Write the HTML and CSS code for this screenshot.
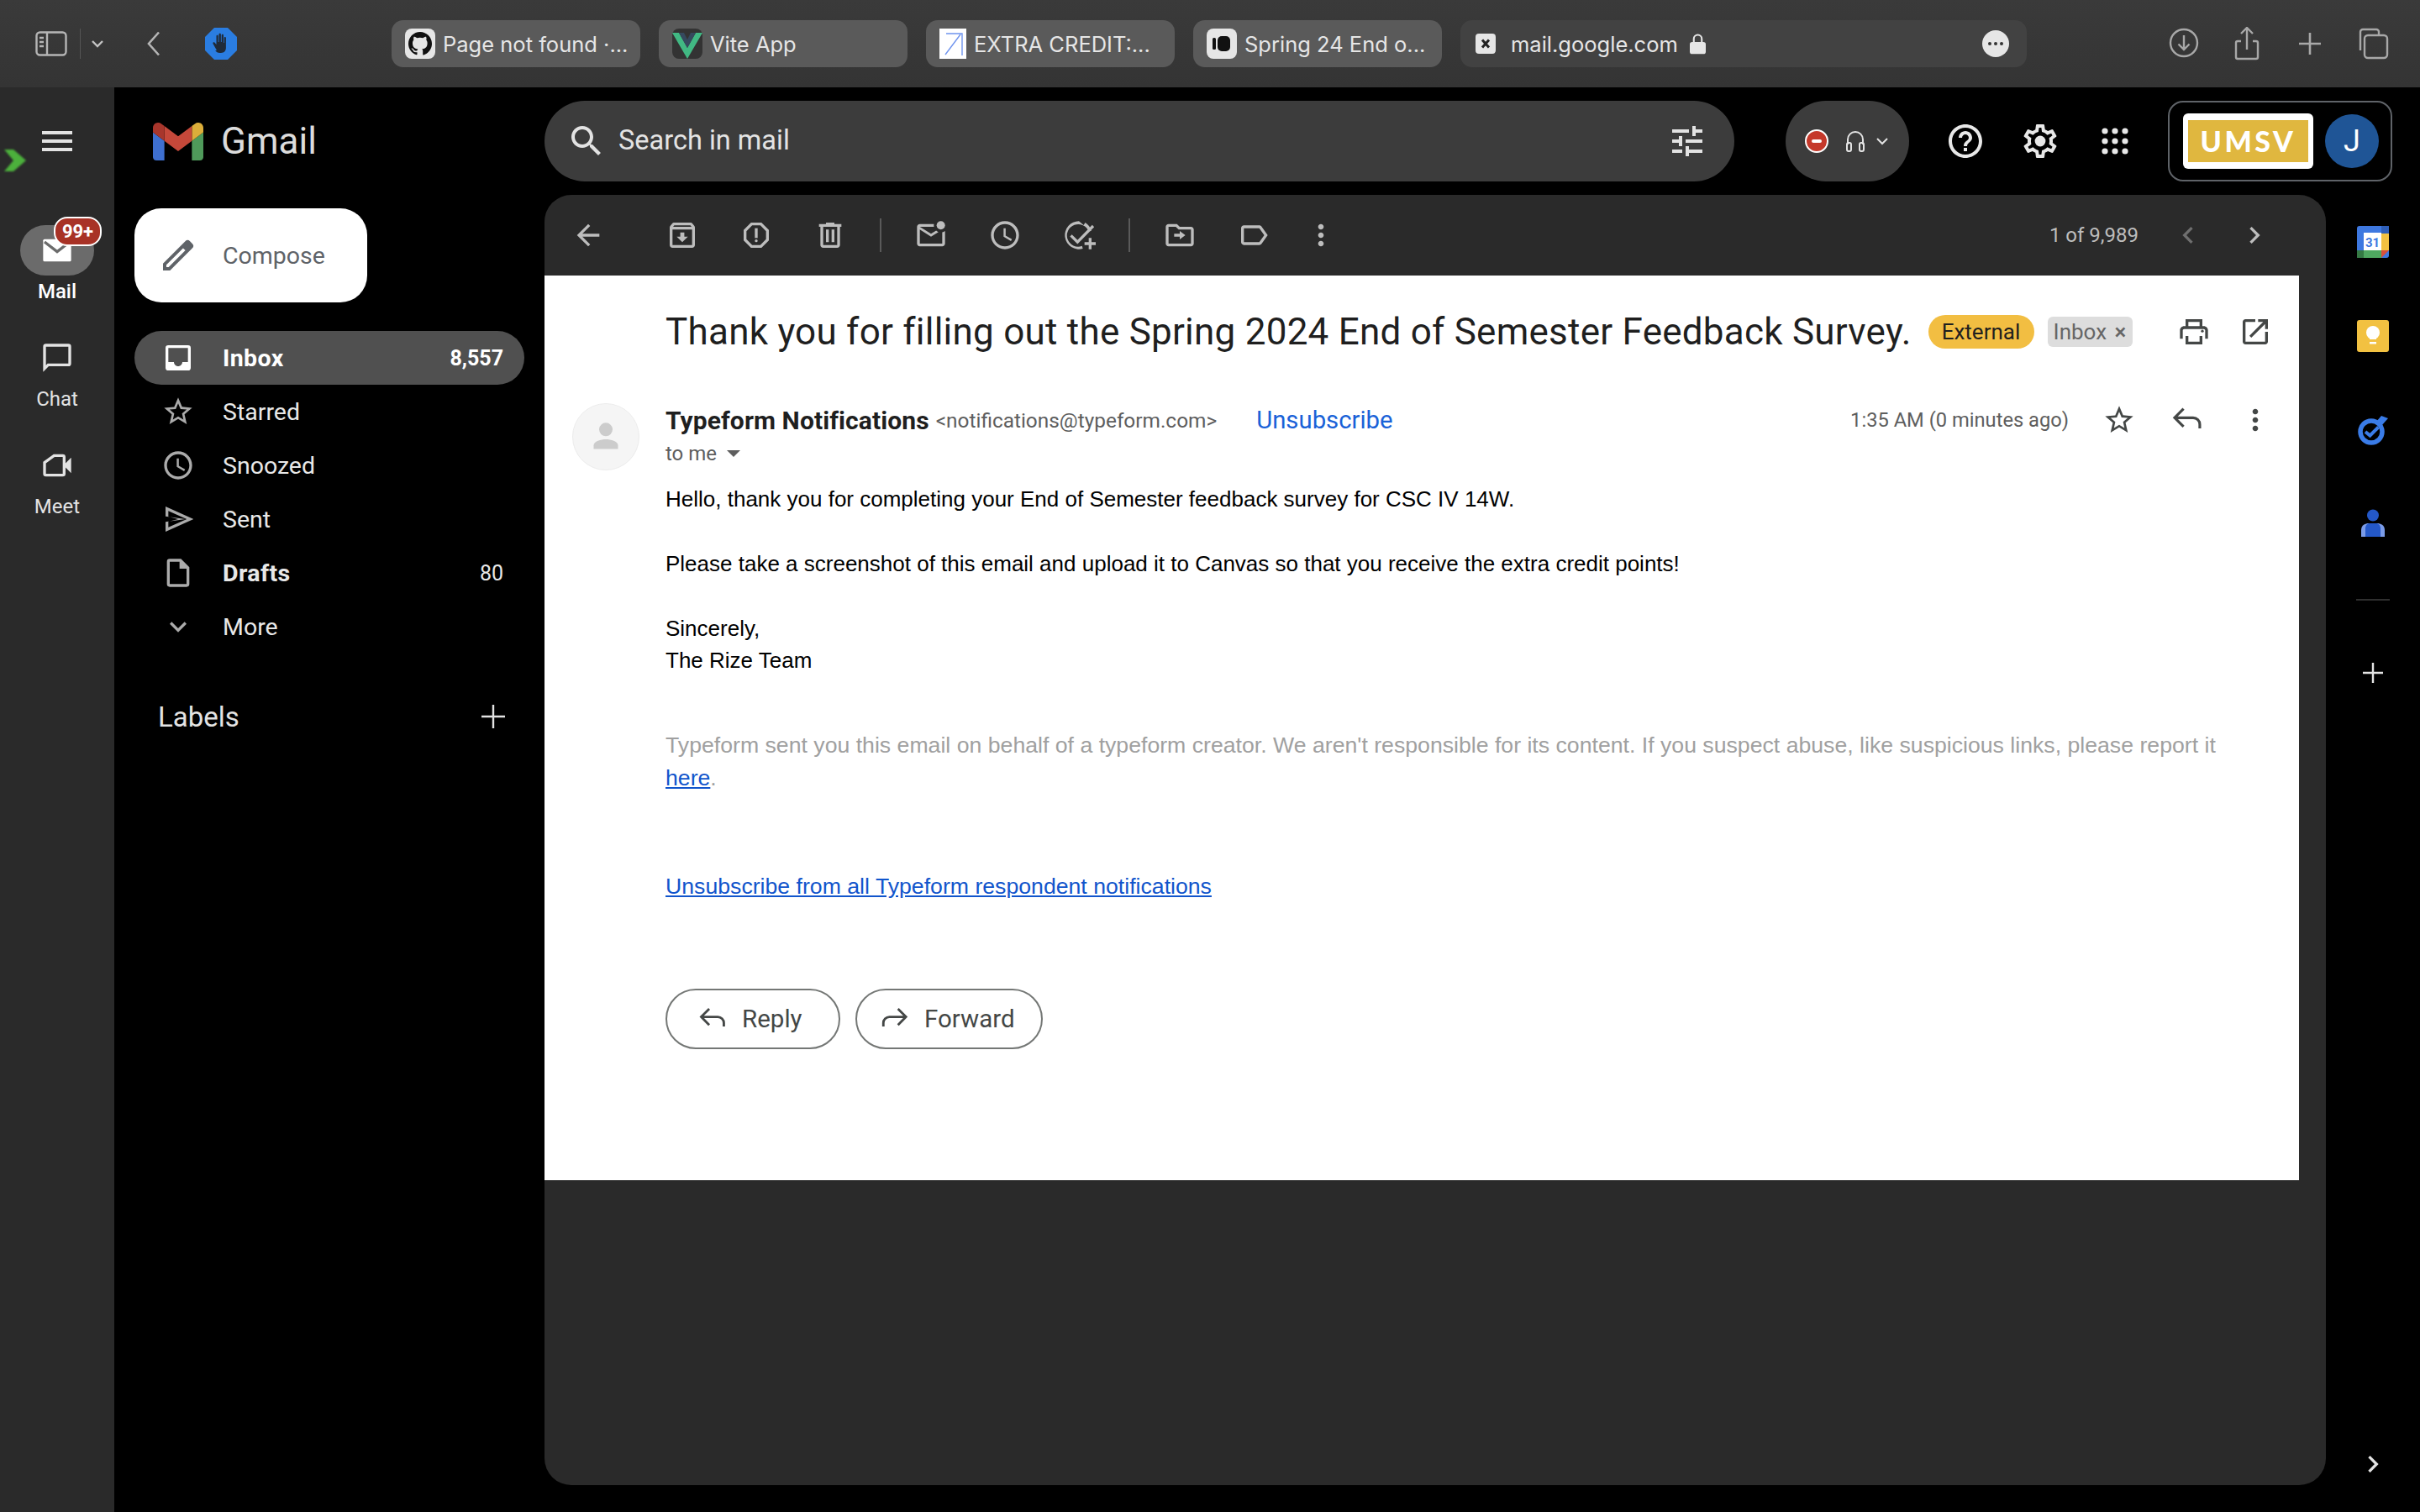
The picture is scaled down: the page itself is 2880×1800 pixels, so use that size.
FILE: index.html
```html
<!DOCTYPE html>
<html lang="en">

<head>
  <meta charset="utf-8" />
  <title>Thank you for filling out the Spring 2024 End of Semester Feedback Survey. - Gmail</title>
  <link rel="stylesheet" href="styles.css">
</head>

<body>
  <svg class="defs" aria-hidden="true">
    <symbol id="i-dots" viewBox="0 0 24 24"><path d="M12 8c1.1 0 2-.9 2-2s-.9-2-2-2-2 .9-2 2 .9 2 2 2zm0 2c-1.1 0-2 .9-2 2s.9 2 2 2 2-.9 2-2-.9-2-2-2zm0 6c-1.1 0-2 .9-2 2s.9 2 2 2 2-.9 2-2-.9-2-2-2z"/></symbol>
    <symbol id="i-clock" viewBox="0 0 24 24"><path d="M11.99 2C6.47 2 2 6.48 2 12s4.47 10 9.99 10C17.52 22 22 17.52 22 12S17.52 2 11.99 2zM12 20c-4.42 0-8-3.58-8-8s3.58-8 8-8 8 3.58 8 8-3.58 8-8 8zm.5-13H11v6l5.25 3.15.75-1.23-4.5-2.67z"/></symbol>
    <symbol id="i-star" viewBox="0 0 24 24"><path d="M22 9.24l-7.19-.62L12 2 9.19 8.63 2 9.24l5.46 4.73L5.82 21 12 17.27 18.18 21l-1.63-7.03L22 9.24zM12 15.4l-3.76 2.27 1-4.28-3.32-2.88 4.38-.38L12 6.1l1.71 4.04 4.38.38-3.32 2.88 1 4.28L12 15.4z"/></symbol>
    <symbol id="i-reply" viewBox="0 0 24 24"><path d="M9.5 6 3.5 12l6 6-1.4 1.4L.7 12l7.4-7.4zM3 11h13a6 6 0 0 1 6 6v3h-2v-3a4 4 0 0 0-4-4H3z" transform="translate(1 -1) scale(.95)"/></symbol>
    <symbol id="i-forward" viewBox="0 0 24 24"><path d="M14.5 6l6 6-6 6 1.4 1.4 7.4-7.4-7.4-7.4zM21 11H8a6 6 0 0 0-6 6v3h2v-3a4 4 0 0 1 4-4h13z" transform="translate(0 -1) scale(.95)"/></symbol>
  </svg>

  <header class="browser-bar">
    <div class="browser-left">
      <svg class="sidebar-btn" viewBox="0 0 38 30" fill="none" stroke="#b5b5b5" stroke-width="2.4"><rect x="1.5" y="1.5" width="35" height="27" rx="4"/><path d="M14 2v26M5 8h5M5 13h5M5 18h5"/></svg>
      <span class="browser-divider"></span>
      <svg class="small-chevron" viewBox="0 0 16 10" fill="none" stroke="#c4c4c4" stroke-width="2.4"><path d="M2 2l6 6 6-6"/></svg>
      <svg class="back-chevron" viewBox="0 0 18 30" fill="none" stroke="#b5b5b5" stroke-width="2.6"><path d="M15 1.5 3 15l12 13.5"/></svg>
      <svg class="adblock" viewBox="0 0 38 38"><path fill="#2a7de1" d="M11 0h16l11 11v16L27 38H11L0 27V11z"/><path fill="#1f2b3a" d="M14 27 9.5 19c-.6-1.3 1-2.3 2-1.2l2 2.2V10c0-1.6 2.2-1.6 2.2 0v7h.8V8c0-1.6 2.4-1.6 2.4 0v9h.8V9c0-1.6 2.3-1.6 2.3 0v9h.7v-6c0-1.5 2.2-1.5 2.2 0v12c0 3-2 6-6 6h-1c-3 0-4.500-1.200-5.700-3z"/></svg>
    </div>

    <div class="tab">
      <svg class="tab-icon" viewBox="0 0 36 36"><rect width="36" height="36" rx="8" fill="#e6e6e6"/><path fill="#111" d="M18 4C10.300 4 4 10.300 4 18c0 6.200 4 11.400 9.600 13.300.7.100.9-.3.9-.7v-2.400c-3.900.800-4.700-1.700-4.700-1.700-.6-1.600-1.600-2-1.600-2-1.300-.9.100-.9.100-.9 1.400.100 2.100 1.400 2.100 1.400 1.300 2.100 3.300 1.500 4.100 1.200.1-.9.500-1.500.9-1.900-3.100-.3-6.400-1.500-6.400-6.900 0-1.500.5-2.800 1.400-3.800-.1-.4-.6-1.800.1-3.700 0 0 1.200-.4 3.800 1.400a13 13 0 0 1 7 0c2.700-1.800 3.800-1.400 3.800-1.400.8 1.900.3 3.300.1 3.700.9 1 1.400 2.300 1.400 3.800 0 5.400-3.300 6.600-6.400 6.900.5.400 1 1.300 1 2.600v3.900c0 .4.200.8 1 .7C28 29.400 32 24.200 32 18c0-7.700-6.300-14-14-14z"/></svg>
      <span>Page not found ·...</span>
    </div>
    <div class="tab">
      <svg class="tab-icon" viewBox="0 0 36 36"><rect width="36" height="36" rx="8" fill="#333"/><path fill="#41b883" d="M0 5h8l10 18L28 5h8L18 36z"/><path fill="#35495e" d="M8 5h6l4 8 4-8h6L18 23z"/></svg>
      <span>Vite App</span>
    </div>
    <div class="tab">
      <svg class="tab-icon square" viewBox="0 0 32 36"><rect width="32" height="36" fill="#fff"/><path fill="none" stroke="#6f94ee" stroke-width="1.400" d="M8 6h19v26M25 7 7 31"/></svg>
      <span>EXTRA CREDIT:...</span>
    </div>
    <div class="tab">
      <svg class="tab-icon" viewBox="0 0 36 36"><rect width="36" height="36" rx="8" fill="#e6e6e6"/><rect x="7" y="11" width="4" height="14" rx="1.500" fill="#111"/><rect x="13" y="9" width="15" height="18" rx="5" fill="#111"/></svg>
      <span>Spring 24 End o...</span>
    </div>
    <div class="address">
      <svg class="address-icon" viewBox="0 0 24 24"><rect width="24" height="24" rx="4" fill="#e6e6e6"/><path stroke="#222" stroke-width="3" d="M8 7.500l8 9M16 7.500l-8 9"/></svg>
      <span class="address-text">mail.google.com</span>
      <svg class="lock" viewBox="0 0 20 26"><path fill="none" stroke="#e6e6e6" stroke-width="2.200" d="M5 12V7a5 5 0 0 1 10 0v5"/><rect y="11" width="20" height="15" rx="3" fill="#e6e6e6"/></svg>
      <svg class="more-circle" viewBox="0 0 32 32"><circle cx="16" cy="16" r="16" fill="#e6e6e6"/><circle cx="9" cy="16" r="2" fill="#333"/><circle cx="16" cy="16" r="2" fill="#333"/><circle cx="23" cy="16" r="2" fill="#333"/></svg>
    </div>

    <div class="browser-right">
      <svg class="bar-icon" viewBox="0 0 40 40" fill="none" stroke="#a8a8a8" stroke-width="2.400"><circle cx="20" cy="19" r="16"/><path d="M20 10v17M13.500 20.500 20 27l6.500-6.500"/></svg>
      <svg class="bar-icon" viewBox="0 0 40 40" fill="none" stroke="#a8a8a8" stroke-width="2.400"><path d="M13 17H9a2 2 0 0 0-2 2v17a2 2 0 0 0 2 2h22a2 2 0 0 0 2-2V19a2 2 0 0 0-2-2h-4M20 27V1M13 8l7-7 7 7"/></svg>
      <svg class="bar-icon" viewBox="0 0 40 40" fill="none" stroke="#a8a8a8" stroke-width="2.600"><path d="M20 7v26M7 20h26"/></svg>
      <svg class="bar-icon" viewBox="0 0 40 40" fill="none" stroke="#a8a8a8" stroke-width="2.400"><path d="M5 28V6a3 3 0 0 1 3-3h16a3 3 0 0 1 3 3v3"/><rect x="10" y="10" width="27" height="27" rx="4"/></svg>
    </div>
  </header>

  <div class="app">
    <aside class="rail">
      <div class="rail-top">
        <svg class="hamburger" viewBox="0 0 36 24"><path fill="#e3e3e3" d="M0 0h36v4H0zM0 10h36v4H0zM0 20h36v4H0z"/></svg>
      </div>
      <div class="rail-item current">
        <div class="rail-pill">
          <svg class="rail-icon" viewBox="0 0 24 24"><path fill="#fff" d="M3 4h18a1 1 0 0 1 1 1v14a1 1 0 0 1-1 1H3a1 1 0 0 1-1-1V5a1 1 0 0 1 1-1z"/><path fill="none" stroke="#6b6b6b" stroke-width="2" d="M3 6l9 7 9-7"/></svg>
          <span class="rail-badge">99+</span>
        </div>
        <span class="rail-label">Mail</span>
      </div>
      <div class="rail-item">
        <div class="rail-pill">
          <svg class="rail-icon" viewBox="0 0 24 24"><path fill="#e3e3e3" d="M20 2H4a2 2 0 0 0-2 2v18l4-4h14a2 2 0 0 0 2-2V4a2 2 0 0 0-2-2zm0 14H5.200L4 17.200V4h16z"/></svg>
        </div>
        <span class="rail-label">Chat</span>
      </div>
      <div class="rail-item">
        <div class="rail-pill">
          <svg class="rail-icon" viewBox="0 0 24 24"><path fill="#e3e3e3" d="M18 10.500V6a2 2 0 0 0-2-2H9.500L2 9.500V18a2 2 0 0 0 2 2h12a2 2 0 0 0 2-2v-4.500l4 4v-11zM16 18H4v-7.500L10.200 6H16z"/></svg>
        </div>
        <span class="rail-label">Meet</span>
      </div>
      <svg class="green-mark" viewBox="0 0 26 26"><path fill="#4cb03c" d="M0 0h11l15 13-15 13H0l11-13z"/></svg>
    </aside>

    <div class="workspace">
      <div class="topbar">
        <div class="brand">
          <svg class="gmail-logo" viewBox="52 42 88 66"><path fill="#3e6fd0" d="M58 108h14V74L52 59v43c0 3.320 2.690 6 6 6"/><path fill="#4f9a5a" d="M120 108h14c3.320 0 6-2.690 6-6V59l-20 15"/><path fill="#dcae3a" d="M120 48v26l20-15v-8c0-7.420-8.470-11.650-14.400-7.200"/><path fill="#c5483a" d="M72 74V48l24 18 24-18v26L96 92"/><path fill="#a8362c" d="M52 51v8l20 15V48l-5.600-4.200c-5.940-4.450-14.400-.22-14.400 7.200"/></svg>
          <span class="gmail-word">Gmail</span>
        </div>
        <div class="search">
          <svg class="search-icon" viewBox="0 0 24 24"><path d="M15.500 14h-.79l-.28-.27C15.410 12.590 16 11.110 16 9.500 16 5.910 13.090 3 9.500 3S3 5.910 3 9.500 5.910 16 9.500 16c1.610 0 3.090-.59 4.230-1.570l.27.28v.79l5 4.990L20.490 19l-4.990-5zm-6 0C7.010 14 5 11.990 5 9.500S7.010 5 9.500 5 14 7.010 14 9.500 11.990 14 9.500 14z"/></svg>
          <span class="search-text">Search in mail</span>
          <svg class="tune-icon" viewBox="0 0 24 24"><path d="M3 17v2h6v-2H3zM3 5v2h10V5H3zm10 16v-2h8v-2h-8v-2h-2v6h2zM7 9v2H3v2h4v2h2V9H7zm14 4v-2H11v2h10zm-6-4h2V7h4V5h-4V3h-2v6z"/></svg>
        </div>
        <div class="status-pill">
          <svg class="status-dot" viewBox="0 0 28 28"><circle cx="14" cy="14" r="13" fill="#c5392b" stroke="#fff" stroke-width="2"/><rect x="8" y="12" width="12" height="4" rx="2" fill="#fff"/></svg>
          <svg class="headset" viewBox="0 0 24 28" fill="none" stroke="#e3e3e3" stroke-width="2"><path d="M3 18v-6a9 9 0 0 1 18 0v6"/><rect x="2" y="16" width="5" height="10" rx="2"/><rect x="17" y="16" width="5" height="10" rx="2"/></svg>
          <svg class="small-chevron" viewBox="0 0 16 10" fill="none" stroke="#e3e3e3" stroke-width="2"><path d="M2 2l6 6 6-6"/></svg>
        </div>
        <svg class="top-icon help" viewBox="0 0 24 24"><path d="M11 18h2v-2h-2v2zm1-16C6.480 2 2 6.480 2 12s4.480 10 10 10 10-4.480 10-10S17.520 2 12 2zm0 18c-4.410 0-8-3.590-8-8s3.590-8 8-8 8 3.590 8 8-3.590 8-8 8zm0-14c-2.210 0-4 1.790-4 4h2c0-1.100.9-2 2-2s2 .9 2 2c0 2-3 1.750-3 5h2c0-2.250 3-2.500 3-5 0-2.210-1.790-4-4-4z"/></svg>
        <svg class="top-icon" viewBox="0 0 24 24"><path d="M19.430 12.980c.04-.32.07-.64.07-.98 0-.34-.03-.66-.07-.98l2.110-1.650c.19-.15.24-.42.12-.64l-2-3.460c-.09-.16-.26-.25-.44-.25-.06 0-.12.01-.17.03l-2.490 1c-.52-.4-1.080-.73-1.690-.98l-.38-2.650C14.460 2.180 14.250 2 14 2h-4c-.25 0-.46.18-.49.42l-.38 2.650c-.61.25-1.170.59-1.690.98l-2.490-1c-.06-.02-.12-.03-.18-.03-.17 0-.34.09-.43.25l-2 3.460c-.13.22-.07.49.12.64l2.110 1.650c-.04.32-.07.65-.07.98 0 .33.03.66.07.98l-2.110 1.650c-.19.15-.24.42-.12.64l2 3.460c.09.16.26.25.44.25.06 0 .12-.01.17-.03l2.490-1c.52.4 1.080.73 1.690.98l.38 2.650c.03.24.24.42.49.42h4c.25 0 .46-.18.49-.42l.38-2.650c.61-.25 1.170-.59 1.690-.98l2.490 1c.06.02.12.03.18.03.17 0 .34-.09.43-.25l2-3.460c.12-.22.07-.49-.12-.64l-2.110-1.650zm-1.980-1.710c.04.31.05.52.05.73 0 .21-.02.43-.05.73l-.14 1.130.89.7 1.080.84-.7 1.210-1.270-.51-1.040-.42-.9.68c-.43.32-.84.56-1.250.73l-1.060.43-.16 1.130-.2 1.350h-1.400l-.19-1.350-.16-1.130-1.060-.43c-.43-.18-.83-.41-1.230-.71l-.91-.7-1.060.43-1.270.51-.7-1.210 1.080-.84.89-.7-.14-1.130c-.03-.31-.05-.54-.05-.74s.02-.43.05-.73l.14-1.130-.89-.7-1.080-.84.7-1.210 1.270.51 1.040.42.9-.68c.43-.32.84-.56 1.250-.73l1.060-.43.16-1.130.2-1.350h1.390l.19 1.350.16 1.130 1.060.43c.43.18.83.41 1.230.71l.91.7 1.060-.43 1.270-.51.7 1.210-1.070.85-.89.7.14 1.130z"/><circle cx="12" cy="12" r="3.200"/></svg>
        <svg class="top-icon apps" viewBox="0 0 32 32"><circle cx="4" cy="4" r="3.600"/><circle cx="16" cy="4" r="3.600"/><circle cx="28" cy="4" r="3.600"/><circle cx="4" cy="16" r="3.600"/><circle cx="16" cy="16" r="3.600"/><circle cx="28" cy="16" r="3.600"/><circle cx="4" cy="28" r="3.600"/><circle cx="16" cy="28" r="3.600"/><circle cx="28" cy="28" r="3.600"/></svg>
        <div class="account">
          <div class="org-logo"><span>UMSV</span></div>
          <div class="avatar-j">J</div>
        </div>
      </div>

      <div class="content-row">
        <nav class="nav">
          <div class="compose">
            <svg class="compose-icon" viewBox="0 0 24 24"><path d="M20.410 4.940l-1.350-1.350a2 2 0 0 0-2.830 0L3 16.820V21h4.180L20.410 7.770a2 2 0 0 0 0-2.830zM6.350 19H5v-1.350L14.960 7.690l1.350 1.350z"/></svg>
            <span>Compose</span>
          </div>
          <ul class="nav-list">
            <li class="nav-row active">
              <svg class="nav-icon" viewBox="0 0 24 24"><path fill="#fff" d="M19 3H5a2 2 0 0 0-2 2v14a2 2 0 0 0 2 2h14a2 2 0 0 0 2-2V5a2 2 0 0 0-2-2zm0 12h-4c0 1.660-1.350 3-3 3s-3-1.340-3-3H5V5h14z"/></svg>
              <span class="nav-name">Inbox</span><span class="nav-count">8,557</span>
            </li>
            <li class="nav-row">
              <svg class="nav-icon"><use href="#i-star"/></svg>
              <span class="nav-name">Starred</span>
            </li>
            <li class="nav-row">
              <svg class="nav-icon"><use href="#i-clock"/></svg>
              <span class="nav-name">Snoozed</span>
            </li>
            <li class="nav-row">
              <svg class="nav-icon" viewBox="0 0 24 24"><path d="M3.010 21 23 12 3.010 3 3 10l14.300 2L3 14l.01 7zm2-10.750V6.090L18.150 12 5 17.910V13.750L12 12z"/></svg>
              <span class="nav-name">Sent</span>
            </li>
            <li class="nav-row strong">
              <svg class="nav-icon" viewBox="0 0 24 24"><path d="M14 2H6a2 2 0 0 0-2 2v16a2 2 0 0 0 2 2h12a2 2 0 0 0 2-2V8zm4 18H6V4h7v5h5z"/></svg>
              <span class="nav-name">Drafts</span><span class="nav-count plain">80</span>
            </li>
            <li class="nav-row">
              <svg class="nav-icon" viewBox="0 0 24 24"><path d="M7.410 8.590 12 13.170l4.590-4.580L18 10l-6 6-6-6z"/></svg>
              <span class="nav-name">More</span>
            </li>
          </ul>
          <div class="labels-row">
            <span>Labels</span>
            <svg class="labels-add" viewBox="0 0 32 32"><path fill="#e3e3e3" d="M14.800 2h2.400v12.800H30v2.400H17.200V30h-2.400V17.200H2v-2.400h12.800z"/></svg>
          </div>
        </nav>

        <main class="panel">
          <div class="toolbar">
            <svg class="tool back" viewBox="0 0 24 24"><path d="M20 11H7.830l5.590-5.590L12 4l-8 8 8 8 1.410-1.410L7.830 13H20v-2z"/></svg>
            <svg class="tool first" viewBox="0 0 24 24"><path d="M20.540 5.230l-1.390-1.680C18.880 3.210 18.470 3 18 3H6c-.47 0-.88.21-1.160.55L3.460 5.230C3.170 5.570 3 6.020 3 6.500V19c0 1.100.9 2 2 2h14c1.100 0 2-.9 2-2V6.500c0-.48-.17-.93-.46-1.270zM6.240 5h11.520l.81.97H5.440l.8-.97zM5 19V8h14v11H5zm8.450-9h-2.900v3H8l4 4 4-4h-2.550z"/></svg>
            <svg class="tool" viewBox="0 0 24 24"><path d="M15.730 3H8.270L3 8.270v7.460L8.270 21h7.460L21 15.730V8.270L15.730 3zM19 14.900 14.900 19H9.100L5 14.900V9.100L9.100 5h5.800L19 9.100v5.800z"/><circle cx="12" cy="16" r="1"/><path d="M11 7h2v7h-2z"/></svg>
            <svg class="tool" viewBox="0 0 24 24"><path d="M15 4V3H9v1H4v2h1v13c0 1.100.9 2 2 2h10c1.100 0 2-.9 2-2V6h1V4h-5zm2 15H7V6h10v13zM9 8h2v9H9zm4 0h2v9h-2z"/></svg>
            <span class="tool-sep"></span>
            <svg class="tool" viewBox="0 0 24 24"><path d="M22 8.980V18c0 1.100-.9 2-2 2H4c-1.100 0-2-.9-2-2V6c0-1.100.9-2 2-2h10.100c-.06.32-.1.66-.1 1s.04.68.1 1H4l8 5 3.670-2.290c.47.43 1.020.76 1.630.98L12 13 4 8v10h16V9.900c.74-.15 1.420-.48 2-.92z"/><circle cx="19" cy="5" r="3"/></svg>
            <svg class="tool"><use href="#i-clock"/></svg>
            <svg class="tool" viewBox="0 0 24 24"><path d="M12 2a10 10 0 1 0 2.800 19.600l-.6-1.900A8 8 0 1 1 19 9.500l1.900-.6A10 10 0 0 0 16.500 3L15.400 4.800zM21.500 4.700 11 15.500l-4-4-1.400 1.400L11 18.300 22.900 6.100zM19 14v3h-3v2h3v3h2v-3h3v-2h-3v-3z"/></svg>
            <span class="tool-sep"></span>
            <svg class="tool" viewBox="0 0 24 24"><path d="M20 6h-8l-2-2H4c-1.100 0-1.990.9-1.990 2L2 18c0 1.100.9 2 2 2h16c1.100 0 2-.9 2-2V8c0-1.100-.9-2-2-2zm0 12H4V6h5.170l2 2H20v10zm-8-3v-2H8v-2h4V9l4 3z"/></svg>
            <svg class="tool" viewBox="0 0 24 24"><path d="M17.630 5.840C17.270 5.330 16.670 5 16 5L5 5.010C3.900 5.010 3 5.900 3 7v10c0 1.100.9 1.990 2 1.990L16 19c.67 0 1.270-.33 1.630-.84L22 12l-4.370-6.160zM16 17H5V7h11l3.550 5L16 17z"/></svg>
            <svg class="tool dots"><use href="#i-dots"/></svg>
            <span class="page-count">1 of 9,989</span>
            <svg class="tool pager dim" viewBox="0 0 24 24"><path d="M15.410 7.410 14 6l-6 6 6 6 1.410-1.410L10.830 12z"/></svg>
            <svg class="tool pager" viewBox="0 0 24 24"><path d="M10 6 8.590 7.410 13.170 12l-4.580 4.590L10 18l6-6z"/></svg>
          </div>

          <article class="message">
            <div class="subject-row">
              <h1>Thank you for filling out the Spring 2024 End of Semester Feedback Survey.</h1>
              <span class="chip-external">External</span>
              <span class="chip-inbox">Inbox <b>×</b></span>
              <div class="subject-actions">
                <svg class="msg-icon" viewBox="0 0 24 24"><path d="M19 8h-1V3H6v5H5c-1.660 0-3 1.340-3 3v6h4v4h12v-4h4v-6c0-1.660-1.340-3-3-3zM8 5h8v3H8V5zm8 14H8v-4h8v4zm2-2v-2H6v2H4v-6c0-.55.45-1 1-1h14c.55 0 1 .45 1 1v6h-2z"/><circle cx="18" cy="11.500" r="1"/></svg>
                <svg class="msg-icon" viewBox="0 0 24 24"><path d="M19 19H5V5h7V3H5c-1.110 0-2 .9-2 2v14c0 1.100.89 2 2 2h14c1.100 0 2-.9 2-2v-7h-2v7zM14 3v2h3.590l-9.830 9.830 1.410 1.410L19 6.410V10h2V3h-7z"/></svg>
              </div>
            </div>

            <div class="msg-body">
              <div class="sender-avatar">
                <svg viewBox="0 0 40 40"><circle cx="20" cy="14" r="5.500" fill="#ccc"/><path fill="#ccc" d="M10 30v-3c0-3.500 6-5 10-5s10 1.500 10 5v3z"/></svg>
              </div>
              <div class="msg-main">
                <div class="sender-row">
                  <span class="sender-name">Typeform Notifications</span>
                  <span class="sender-mail">&lt;notifications@typeform.com&gt;</span>
                  <a class="sender-unsub">Unsubscribe</a>
                  <span class="msg-time">1:35 AM (0 minutes ago)</span>
                  <svg class="msg-icon"><use href="#i-star"/></svg>
                  <svg class="msg-icon"><use href="#i-reply"/></svg>
                  <svg class="msg-icon"><use href="#i-dots"/></svg>
                </div>
                <div class="to-row">to me <span class="caret"></span></div>

                <div class="mail-text">
                  <p>Hello, thank you for completing your End of Semester feedback survey for CSC IV 14W.<br><br>Please take a screenshot of this email and upload it to Canvas so that you receive the extra credit points!<br><br>Sincerely,<br>The Rize Team</p>
                  <p class="mail-note">Typeform sent you this email on behalf of a typeform creator. We aren't responsible for its content. If you suspect abuse, like suspicious links, please report it <a>here</a>.</p>
                  <p class="mail-unsub"><a>Unsubscribe from all Typeform respondent notifications</a></p>
                </div>

                <div class="reply-row">
                  <div class="reply-btn reply"><svg><use href="#i-reply"/></svg>Reply</div>
                  <div class="reply-btn forward"><svg><use href="#i-forward"/></svg>Forward</div>
                </div>
              </div>
            </div>
          </article>
        </main>

        <aside class="addons">
          <svg class="addon" viewBox="0 0 38 38"><rect width="38" height="38" rx="3" fill="#3e78e0"/><rect x="29" width="9" height="9" fill="#2f5fb8"/><rect x="29" y="9" width="9" height="20" fill="#f2c141"/><rect y="29" width="29" height="9" fill="#4fa860"/><rect y="29" width="8" height="9" fill="#357a44"/><path fill="#d8503c" d="M29 29h9l-9 9z"/><rect x="8" y="8" width="21" height="21" fill="#fff"/><text x="18.500" y="25" text-anchor="middle" class="cal-num">31</text></svg>
          <svg class="addon" viewBox="0 0 38 38"><rect width="38" height="38" rx="3" fill="#f2c141"/><circle cx="19" cy="15" r="8" fill="#fff"/><rect x="15" y="19" width="8" height="4" fill="#fff"/><rect x="15" y="26" width="8" height="2.500" fill="#fff"/></svg>
          <svg class="addon" viewBox="0 0 38 38"><circle cx="17" cy="21" r="13" fill="none" stroke="#3a7ce8" stroke-width="5.500"/><path fill="#3a7ce8" d="M29 2l8 3-8 9-6-5z"/><path fill="none" stroke="#3a7ce8" stroke-width="4" d="M10 21l5.500 4.500 10-10"/></svg>
          <svg class="addon" viewBox="0 0 38 38"><circle cx="19" cy="8.500" r="7" fill="#2458c8"/><path fill="#7b9ce8" d="M5 34v-8c0-6 5-8 9-8h10c4 0 9 2 9 8v8z"/><path fill="#2458c8" d="M10 34V24c0-4 3-6 5-6h8c2 0 5 2 5 6v10z"/></svg>
          <span class="addon-sep"></span>
          <svg class="addon addon-plus" viewBox="0 0 24 24"><path fill="#e3e3e3" d="M10.800 0h2.400v10.800H24v2.400H13.200V24h-2.400V13.200H0v-2.400h10.800z"/></svg>
          <svg class="addon-collapse" viewBox="0 0 24 24"><path fill="#e3e3e3" d="M10 6 8.590 7.410 13.170 12l-4.580 4.590L10 18l6-6z"/></svg>
        </aside>
      </div>
    </div>
  </div>
</body>

</html>
```

FILE: styles.css
```css
* {
  box-sizing: border-box;
}

html,
body {
  margin: 0;
  height: 100%;
  overflow: hidden;
  background: #000;
}

body {
  font-family: Roboto, sans-serif;
  color: #e3e3e3;
  display: flex;
  flex-direction: column;
}

.defs {
  display: none;
}

svg {
  display: block;
  flex: none;
}

svg:not([fill]) {
  fill: currentColor;
}

/* browser chrome */
.browser-bar {
  height: 104px;
  flex: none;
  display: flex;
  align-items: center;
  background: linear-gradient(#3a3a3a, #343434);
  font-family: Inter, sans-serif;
  font-size: 25.5px;
  color: #e6e6e6;
}

.browser-left {
  width: 466px;
  flex: none;
  display: flex;
  align-items: center;
  padding-left: 42px;
}

.sidebar-btn {
  width: 38px;
  height: 30px;
}

.browser-divider {
  width: 1px;
  height: 36px;
  margin: 0 0 0 15px;
  background: #555;
}

.small-chevron {
  width: 16px;
  height: 10px;
}

.browser-left .small-chevron {
  margin-left: 12px;
}

.back-chevron {
  width: 18px;
  height: 30px;
  margin-left: 50px;
}

.adblock {
  width: 38px;
  height: 38px;
  margin-left: 52px;
}

.tab {
  width: 296px;
  height: 56px;
  flex: none;
  margin-right: 22px;
  padding-left: 16px;
  display: flex;
  align-items: center;
  gap: 9px;
  border-radius: 14px;
  background: #5a5a5a;
  white-space: nowrap;
}

.tab-icon {
  width: 36px;
  height: 36px;
}

.tab-icon.square {
  width: 32px;
}

.address {
  width: 674px;
  height: 56px;
  flex: none;
  padding: 0 21px 0 18px;
  display: flex;
  align-items: center;
  border-radius: 14px;
  background: #424242;
}

.address-icon {
  width: 24px;
  height: 24px;
}

.address-text {
  margin-left: 18px;
}

.lock {
  width: 19px;
  height: 26px;
  margin-left: 14px;
}

.more-circle {
  width: 32px;
  height: 32px;
  margin-left: auto;
}

.browser-right {
  display: flex;
  gap: 35px;
  margin-left: 167px;
}

.bar-icon {
  width: 40px;
  height: 40px;
}

/* app layout */
.app {
  flex: 1;
  min-height: 0;
  display: flex;
}

.rail {
  width: 136px;
  flex: none;
  position: relative;
  background: #2a2a2a;
}

.rail-top {
  height: 128px;
  display: flex;
  align-items: center;
  justify-content: center;
}

.hamburger {
  width: 36px;
  height: 24px;
}

.rail-item {
  height: 128px;
  display: flex;
  flex-direction: column;
  align-items: center;
}

.rail-item.current {
  margin-top: 36px;
}

.rail-pill {
  width: 88px;
  height: 60px;
  flex: none;
  position: relative;
  display: flex;
  align-items: center;
  justify-content: center;
  border-radius: 30px;
}

.current .rail-pill {
  background: #6b6b6b;
}

.rail-icon {
  width: 40px;
  height: 40px;
}

.rail-badge {
  position: absolute;
  left: 40px;
  top: -10px;
  width: 57px;
  height: 35px;
  border: 2px solid #fff;
  border-radius: 16px;
  background: #a83226;
  color: #fff;
  font-size: 22px;
  font-weight: 700;
  line-height: 31px;
  text-align: center;
}

.rail-label {
  margin-top: 3px;
  font-size: 24px;
  line-height: 32px;
}

.current .rail-label {
  font-weight: 500;
  color: #fff;
}

.green-mark {
  position: absolute;
  left: 5px;
  top: 74px;
  width: 26px;
  height: 26px;
  filter: blur(1px);
}

.workspace {
  flex: 1;
  min-width: 0;
  display: flex;
  flex-direction: column;
}

.topbar {
  height: 128px;
  flex: none;
  display: flex;
  align-items: center;
}

.brand {
  width: 512px;
  flex: none;
  padding-left: 46px;
  display: flex;
  align-items: center;
  gap: 21px;
}

.gmail-logo {
  width: 60px;
  height: 45px;
}

.gmail-word {
  font-size: 44px;
  color: #dcdcdc;
}

.search {
  width: 1416px;
  height: 96px;
  flex: none;
  padding: 0 32px 0 26px;
  display: flex;
  align-items: center;
  border-radius: 48px;
  background: #3c3c3c;
}

.search-icon {
  width: 48px;
  height: 48px;
  color: #e3e3e3;
}

.search-text {
  margin-left: 14px;
  margin-top: -2px;
  font-size: 32.5px;
  color: #e3e3e3;
}

.tune-icon {
  width: 48px;
  height: 48px;
  margin-left: auto;
  color: #e3e3e3;
}

.status-pill {
  width: 147px;
  height: 96px;
  flex: none;
  margin-left: 61px;
  padding-left: 23px;
  display: flex;
  align-items: center;
  border-radius: 48px;
  background: #3c3c3c;
}

.status-dot {
  width: 28px;
  height: 28px;
}

.headset {
  width: 24px;
  height: 28px;
  margin: 0 12px 0 20px;
}

.top-icon {
  width: 48px;
  height: 48px;
  margin-left: 41px;
  color: #e8e8e8;
}

.top-icon.help {
  margin-left: 43px;
}

.top-icon.apps {
  width: 32px;
  height: 32px;
  margin-left: 49px;
}

.account {
  width: 267px;
  height: 96px;
  flex: none;
  margin-left: 47px;
  padding: 0 14px 0 16px;
  display: flex;
  align-items: center;
  justify-content: space-between;
  border: 2px solid #5f6368;
  border-radius: 18px;
}

.org-logo {
  width: 155px;
  height: 66px;
  border-radius: 6px;
  background: #fff;
  padding: 8px 6px;
}

.org-logo span {
  display: block;
  height: 100%;
  background: #e0b73f;
  color: #fff;
  font-family: Lato, sans-serif;
  font-weight: 900;
  font-size: 34px;
  letter-spacing: 3.5px;
  line-height: 50px;
  text-align: center;
}

.avatar-j {
  width: 64px;
  height: 64px;
  border-radius: 50%;
  background: #1f5596;
  color: #fff;
  font-size: 36px;
  line-height: 64px;
  text-align: center;
}

.content-row {
  flex: 1;
  min-height: 0;
  display: flex;
  padding-bottom: 32px;
}

/* left nav */
.nav {
  width: 512px;
  flex: none;
  padding-left: 24px;
}

.compose {
  width: 277px;
  height: 112px;
  margin-top: 16px;
  padding-left: 28px;
  display: flex;
  align-items: center;
  gap: 29px;
  border-radius: 32px;
  background: #fff;
  color: #5f6368;
  font-size: 28.5px;
  font-weight: 400;
}

.compose-icon {
  width: 48px;
  height: 48px;
}

.nav-list {
  list-style: none;
  margin: 34px 0 0;
  padding: 0;
}

.nav-row {
  width: 464px;
  height: 64px;
  padding: 0 25px 0 32px;
  display: flex;
  align-items: center;
  border-radius: 32px;
  font-size: 28.5px;
  color: #e8e8e8;
}

.nav-row.active {
  background: #505050;
  color: #fff;
  font-weight: 700;
  letter-spacing: .4px;
}

.nav-row.strong {
  font-weight: 700;
  letter-spacing: .4px;
}

.nav-icon {
  width: 40px;
  height: 40px;
  margin-right: 33px;
  color: #ababab;
}

.nav-row.active .nav-icon {
  color: #fff;
}

.nav-count {
  margin-left: auto;
  font-size: 25px;
  letter-spacing: 0;
}

.nav-count.plain {
  font-weight: 400;
}

.labels-row {
  width: 464px;
  height: 48px;
  margin-top: 51px;
  padding: 0 21px 0 28px;
  display: flex;
  align-items: center;
  justify-content: space-between;
  font-size: 33px;
}

.labels-add {
  width: 32px;
  height: 32px;
}

/* message panel */
.panel {
  width: 2120px;
  flex: none;
  display: flex;
  flex-direction: column;
  border-radius: 32px;
  background: #2a2a2a;
  overflow: hidden;
}

.toolbar {
  height: 96px;
  flex: none;
  padding: 0 65px 0 32px;
  display: flex;
  align-items: center;
  gap: 48px;
  color: #bdbdbd;
}

.tool {
  width: 40px;
  height: 40px;
}

.tool.first {
  margin-left: 24px;
}

.tool.dots {
  margin-left: -8px;
}

.tool-sep {
  width: 2px;
  height: 40px;
  margin: 0 -9px;
  background: #5a5a5a;
}

.page-count {
  margin-left: auto;
  font-size: 24px;
  color: #bdbdbd;
}

.tool.pager {
  margin-left: -9px;
}

.tool.dim {
  color: #6f6f6f;
}

.message {
  width: 2088px;
  height: 1077px;
  flex: none;
  background: #fff;
  color: #1f1f1f;
}

.subject-row {
  height: 134px;
  padding: 0 32px 0 144px;
  display: flex;
  align-items: center;
}

.subject-row h1 {
  margin: 0;
  font-size: 44px;
  font-weight: 400;
  letter-spacing: .24px;
  white-space: nowrap;
}

.chip-external {
  width: 126px;
  height: 40px;
  margin-left: 20px;
  border-radius: 20px;
  background: #f2be42;
  font-size: 26px;
  line-height: 40px;
  text-align: center;
}

.chip-inbox {
  width: 101px;
  height: 36px;
  margin-left: 16px;
  border-radius: 6px;
  background: #dddddd;
  color: #666;
  font-size: 26px;
  line-height: 36px;
  text-align: center;
}

.chip-inbox b {
  margin-left: 3px;
  font-weight: 500;
}

.subject-actions {
  margin-left: auto;
  display: flex;
  gap: 33px;
}

.msg-icon {
  width: 40px;
  height: 40px;
  color: #444746;
}

.msg-body {
  display: flex;
  padding: 18px 32px 0 33px;
}

.sender-avatar {
  width: 80px;
  height: 80px;
  flex: none;
  margin-right: 31px;
  border-radius: 50%;
  background: #f5f5f5;
  border: 1px solid #ececec;
  padding: 10px;
}

.msg-main {
  flex: 1;
  min-width: 0;
}

.sender-row {
  height: 40px;
  display: flex;
  align-items: center;
}

.sender-name {
  font-size: 30px;
  font-weight: 700;
  letter-spacing: .1px;
  color: #1f1f1f;
}

.sender-mail {
  margin-left: 8px;
  font-size: 24.4px;
  color: #5e5e5e;
}

.sender-unsub {
  margin-left: 47px;
  font-size: 29.3px;
  color: #1a62d8;
}

.msg-time {
  margin-left: auto;
  margin-right: 40px;
  font-size: 23.7px;
  color: #5e5e5e;
}

.sender-row .msg-icon + .msg-icon {
  margin-left: 41px;
}

.to-row {
  height: 40px;
  display: flex;
  align-items: center;
  gap: 12px;
  font-size: 24px;
  color: #5e5e5e;
}

.caret {
  width: 0;
  height: 0;
  border-left: 8px solid transparent;
  border-right: 8px solid transparent;
  border-top: 8px solid #5e5e5e;
}

.mail-text {
  margin-top: 15px;
  width: 1870px;
  font-family: "Liberation Sans", Arial, sans-serif;
  font-size: 26px;
  line-height: 38.4px;
  color: #000;
}

.mail-text p {
  margin: 0;
}

.mail-text a {
  color: #1155cc;
  text-decoration: underline;
}

.mail-note {
  padding-top: 63px;
  font-size: 26.67px;
  color: #a0a0a0;
}

.mail-unsub {
  padding-top: 91px;
  font-size: 26.67px;
}

.reply-row {
  margin-top: 102px;
  display: flex;
  gap: 18px;
}

.reply-btn {
  height: 72px;
  display: flex;
  align-items: center;
  border: 2px solid #747775;
  border-radius: 36px;
  color: #444746;
  font-size: 29.5px;
  font-weight: 400;
}

.reply-btn svg {
  width: 36px;
  height: 36px;
  margin-right: 17px;
}

.reply-btn.reply {
  width: 208px;
  padding-left: 36px;
}

.reply-btn.forward {
  width: 223px;
  padding-left: 27px;
}

/* right add-ons */
.addons {
  width: 112px;
  flex: none;
  padding-top: 37px;
  margin-bottom: -32px;
  display: flex;
  flex-direction: column;
  align-items: center;
  gap: 74px;
}

.addon {
  width: 38px;
  height: 38px;
}

.cal-num {
  font-family: Roboto, sans-serif;
  font-size: 15px;
  font-weight: 700;
  fill: #3e78e0;
}

.addon-sep {
  width: 40px;
  height: 2px;
  margin-top: -4px;
  background: #2f2f2f;
}

.addon-plus {
  width: 24px;
  height: 24px;
}

.addon-collapse {
  width: 40px;
  height: 40px;
  margin-top: auto;
  margin-bottom: 37px;
}
```
